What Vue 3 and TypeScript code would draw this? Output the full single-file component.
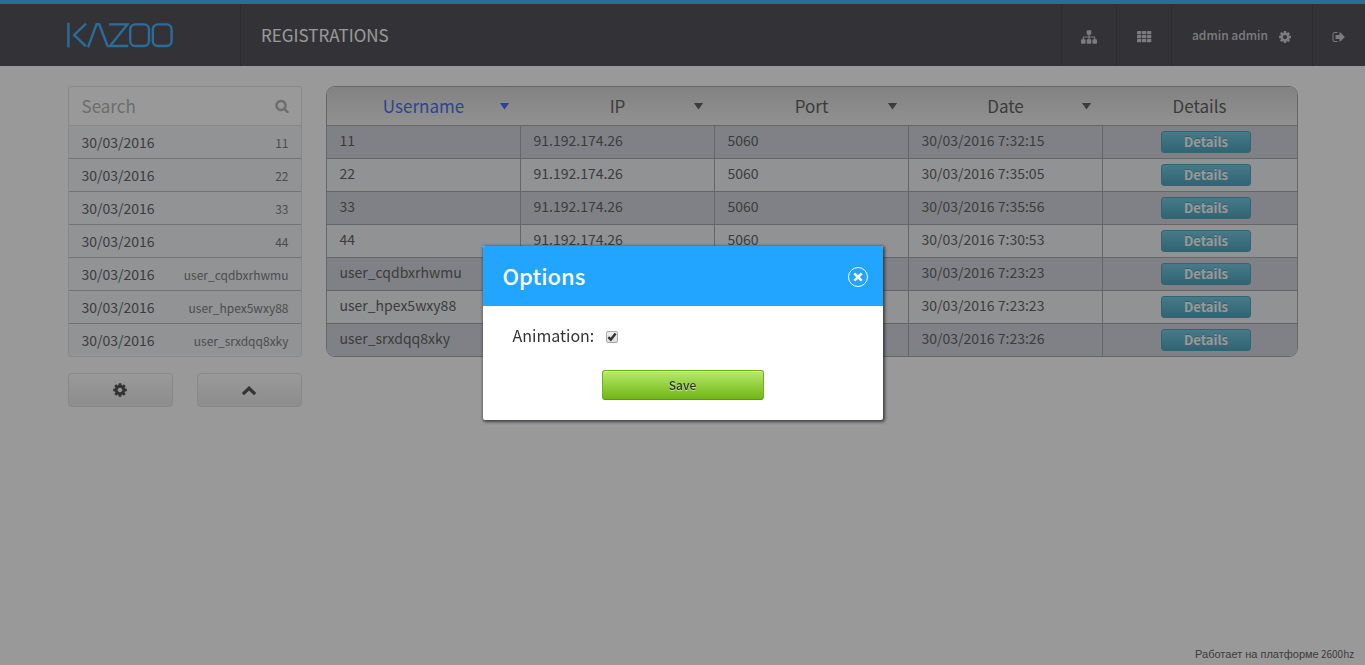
<script setup lang="ts">
import { ref, computed } from 'vue'

interface Registration {
  username: string
  ip: string
  port: number
  day: string
  time: string
}

const day = '30/03/2016'
const ip = '91.192.174.26'

const registrations: Registration[] = [
  { username: '11', ip, port: 5060, day, time: '7:32:15' },
  { username: '22', ip, port: 5060, day, time: '7:35:05' },
  { username: '33', ip, port: 5060, day, time: '7:35:56' },
  { username: '44', ip, port: 5060, day, time: '7:30:53' },
  { username: 'user_cqdbxrhwmu', ip, port: 5060, day, time: '7:23:23' },
  { username: 'user_hpex5wxy88', ip, port: 5060, day, time: '7:23:23' },
  { username: 'user_srxdqq8xky', ip, port: 5060, day, time: '7:23:26' },
]

const columns = ['Username', 'IP', 'Port', 'Date']
const sortedBy = ref('Username')
const search = ref('')
const animation = ref(true)
const dialogOpen = ref(true)

const visible = computed(() =>
  registrations.filter((r) => r.username.includes(search.value.trim())),
)

const cogPath =
  'M1152 896q0-106-75-181t-181-75-181 75-75 181 75 181 181 75 181-75 75-181zm512-109v222q0 12-8 23t-20 13l-185 28q-19 54-39 91 35 50 107 138 10 12 10 25t-9 23q-27 37-99 108t-94 71q-12 0-26-9l-138-108q-44 23-91 38-16 136-29 186-7 28-36 28h-222q-14 0-24.5-8.5t-11.5-21.5l-28-184q-49-16-90-37l-141 107q-10 9-25 9-14 0-25-11-126-114-165-168-7-10-7-23 0-12 8-23 15-21 51-66.5t54-70.5q-27-50-41-99l-183-27q-13-2-21-12.5t-8-23.5v-222q0-12 8-23t19-13l186-28q14-46 39-92-40-57-107-138-10-12-10-24 0-10 9-23 26-36 98.5-107.5t94.5-71.5q13 0 26 10l138 107q44-23 91-38 16-136 29-186 7-28 36-28h222q14 0 24.5 8.5t11.5 21.5l28 184q49 16 90 37l142-107q9-9 24-9 13 0 25 10 129 119 165 170 7 8 7 22 0 12-8 23-15 21-51 66.5t-54 70.5q26 50 41 98l183 28q13 2 21 12.5t8 23.5z'
</script>

<template>
  <div class="page">
    <header class="topbar">
      <a class="brand" href="#" aria-label="Kazoo">
        <svg width="108" height="28" viewBox="0 0 108 28" fill="none" stroke="#22a5ff" stroke-width="2.4" aria-hidden="true">
          <path d="M2.4 1.8v24.6" />
          <path d="M20 2.6 8.2 14 20 25.4" />
          <path d="M22 26.4 30.6 3.2h2.6L42 26" />
          <path d="M43 3.4h18.4L44 25h18.4" />
          <rect x="64.2" y="3.4" width="18.8" height="21.6" rx="5" />
          <rect x="86.8" y="3.4" width="18.8" height="21.6" rx="5" />
        </svg>
      </a>
      <h1 class="title">REGISTRATIONS</h1>
      <nav class="tools">
        <a class="tool" href="#" aria-label="Accounts">
          <svg class="icon16" viewBox="0 0 1792 1792" aria-hidden="true">
            <path d="M1792 1248v320q0 40-28 68t-68 28h-320q-40 0-68-28t-28-68v-320q0-40 28-68t68-28h96v-192h-512v192h96q40 0 68 28t28 68v320q0 40-28 68t-68 28h-320q-40 0-68-28t-28-68v-320q0-40 28-68t68-28h96v-192h-512v192h96q40 0 68 28t28 68v320q0 40-28 68t-68 28h-320q-40 0-68-28t-28-68v-320q0-40 28-68t68-28h96v-192q0-52 38-90t90-38h512v-192h-96q-40 0-68-28t-28-68v-320q0-40 28-68t68-28h320q40 0 68 28t28 68v320q0 40-28 68t-68 28h-96v192h512q52 0 90 38t38 90v192h96q40 0 68 28t28 68z" />
          </svg>
        </a>
        <a class="tool" href="#" aria-label="Apps">
          <svg class="icon16" viewBox="0 0 16 16" aria-hidden="true">
            <g v-for="row in 3" :key="row">
              <rect v-for="col in 3" :key="col" :x="col * 5 - 4" :y="row * 4 - 2" width="4.3" height="3.2" rx="0.4" />
            </g>
          </svg>
        </a>
        <a class="tool user" href="#">
          <span>admin admin</span>
          <svg class="icon14" viewBox="0 0 1792 1792" aria-hidden="true"><path :d="cogPath" /></svg>
        </a>
        <a class="tool exit" href="#" aria-label="Log out">
          <svg class="icon14" viewBox="0 0 1792 1792" aria-hidden="true">
            <path d="M704 1440q0 4 1 20t.5 26.5-3 23.5-10 19.5-20.5 6.5h-320q-119 0-203.5-84.5t-84.5-203.5v-704q0-119 84.5-203.5t203.5-84.5h320q13 0 22.5 9.5t9.5 22.5q0 4 1 20t.5 26.5-3 23.5-10 19.5-20.5 6.5h-320q-66 0-113 47t-47 113v704q0 66 47 113t113 47h312l11.5 1 11.5 3 8 5.5 7 9 2 13.5zm928-544q0 26-19 45l-544 544q-19 19-45 19t-45-19-19-45v-288h-448q-26 0-45-19t-19-45v-384q0-26 19-45t45-19h448v-288q0-26 19-45t45-19 45 19l544 544q19 19 19 45z" />
          </svg>
        </a>
      </nav>
    </header>

    <main class="content">
      <aside class="side">
        <div class="panel">
          <label class="search">
            <input v-model="search" type="text" placeholder="Search" aria-label="Search" />
            <svg class="icon14 lens" viewBox="0 0 1792 1792" aria-hidden="true">
              <path d="M1216 832q0-185-131.5-316.5t-316.5-131.5-316.5 131.5-131.5 316.5 131.5 316.5 316.5 131.5 316.5-131.5 131.5-316.5zm512 832q0 52-38 90t-90 38q-54 0-90-38l-343-342q-179 124-399 124-143 0-273.5-55.5t-225-150-150-225-55.5-273.5 55.5-273.5 150-225 225-150 273.5-55.5 273.5 55.5 225 150 150 225 55.5 273.5q0 220-124 399l343 343q37 37 37 90z" />
            </svg>
          </label>
          <ul class="list">
            <li v-for="r in visible" :key="r.username">
              <span class="date">{{ r.day }}</span>
              <span class="name">{{ r.username }}</span>
            </li>
          </ul>
        </div>
        <div class="actions">
          <button type="button" class="plain" aria-label="Options" @click="dialogOpen = true">
            <svg class="icon16" viewBox="0 0 1792 1792" aria-hidden="true"><path :d="cogPath" /></svg>
          </button>
          <button type="button" class="plain" aria-label="Collapse">
            <svg class="icon16" viewBox="0 0 16 16" aria-hidden="true">
              <path d="M8 4 15.2 11 13 13.2 8 8.4 3 13.2.8 11z" />
            </svg>
          </button>
        </div>
      </aside>

      <div class="grid-wrap">
        <table class="grid">
          <thead>
            <tr>
              <th v-for="c in columns" :key="c" scope="col">
                <button type="button" class="sort" :class="{ active: sortedBy === c }" @click="sortedBy = c">
                  <span class="label">{{ c }}</span>
                  <span class="caret"></span>
                </button>
              </th>
              <th scope="col">Details</th>
            </tr>
          </thead>
          <tbody>
            <tr v-for="r in visible" :key="r.username">
              <td>{{ r.username }}</td>
              <td>{{ r.ip }}</td>
              <td>{{ r.port }}</td>
              <td>{{ r.day }} {{ r.time }}</td>
              <td class="more"><button type="button" class="details">Details</button></td>
            </tr>
          </tbody>
        </table>
      </div>
    </main>

    <footer class="footer"><span class="powered">Работает на платформе</span> 2600hz</footer>

    <div v-if="dialogOpen" class="overlay">
      <section class="dialog" role="dialog" aria-labelledby="options-title">
        <header class="dialog-head">
          <h2 id="options-title">Options</h2>
          <button type="button" class="close" aria-label="Close" @click="dialogOpen = false">
            <svg width="10" height="10" viewBox="0 0 10 10" stroke="#fff" stroke-width="2.6" aria-hidden="true">
              <path d="M1.3 1.3 8.7 8.7M8.7 1.3 1.3 8.7" />
            </svg>
          </button>
        </header>
        <form class="dialog-body" @submit.prevent="dialogOpen = false">
          <div class="field">
            <label for="animation">Animation:</label>
            <span class="check">
              <input id="animation" v-model="animation" type="checkbox" />
              <svg v-if="animation" viewBox="0 0 12 12" fill="none" stroke="#333" stroke-width="2.4" aria-hidden="true">
                <path d="M2.4 6.2 4.8 8.6 9.6 2.6" />
              </svg>
            </span>
          </div>
          <button type="submit" class="save">Save</button>
        </form>
      </section>
    </div>
  </div>
</template>

<style>
body {
  margin: 0;
  background: #fff;
}
</style>

<style scoped>
.page {
  min-height: 100vh;
  display: flex;
  flex-direction: column;
  font-family: "Noto Sans CJK SC", "Noto Sans", sans-serif;
  font-size: 14px;
  line-height: 20px;
  color: #444;
}

.page *,
.page {
  box-sizing: border-box;
}

button,
input {
  font-family: inherit;
  color: inherit;
  margin: 0;
}

button {
  cursor: pointer;
  padding: 0;
}

svg {
  display: block;
}

.icon14 {
  width: 14px;
  height: 14px;
  fill: currentColor;
}

.icon16 {
  width: 16px;
  height: 16px;
  fill: currentColor;
}

.topbar {
  display: flex;
  height: 66px;
  border-top: 4px solid #22a5ff;
  background: #333138;
}

.brand {
  display: flex;
  align-items: center;
  width: 241px;
  padding-left: 66px;
  border-right: 1px solid #242228;
}

.title {
  flex: 1;
  margin: 0;
  padding-left: 20px;
  font-size: 17px;
  font-weight: 400;
  line-height: 61px;
  color: #fff;
}

.tools {
  display: flex;
}

.tool {
  display: flex;
  align-items: center;
  justify-content: center;
  gap: 10px;
  width: 55px;
  padding-top: 4px;
  border-left: 1px solid #242228;
  color: #c4c4ca;
  text-decoration: none;
  font-size: 12px;
  font-weight: 500;
}

.tool.user {
  width: 141px;
}

.tool.user span {
  padding-bottom: 4px;
}

.tool.exit {
  width: 53px;
}

.content {
  flex: 1;
  display: flex;
  align-items: flex-start;
  gap: 24px;
  width: calc(100% - 40px);
  max-width: 1230px;
  margin: 20px auto 0;
}

.side {
  flex: none;
  width: 234px;
}

.panel {
  border: 1px solid #ddd;
  border-radius: 3px;
  overflow: hidden;
}

.search {
  display: flex;
  align-items: center;
  height: 39px;
  padding: 0 12px 0 13px;
  border-bottom: 1px solid #ddd;
  color: #a6a6a4;
}

.search input {
  flex: 1;
  min-width: 0;
  padding: 0;
  border: 0;
  outline: 0;
  background: none;
  font-size: 17px;
  line-height: 26px;
}

.search input::placeholder {
  color: #a6a6a4;
  opacity: 1;
}

.lens {
  stroke: currentColor;
  stroke-width: 60;
}

.list {
  margin: 0;
  padding: 0;
  list-style: none;
}

.list li {
  display: flex;
  align-items: baseline;
  justify-content: space-between;
  height: 33px;
  padding: 6px 12px 0 13px;
  border-bottom: 1px solid #b3b5b9;
  background: #eff3f7;
}

.list li:last-child {
  height: 32px;
  border-bottom: 0;
}

.name {
  font-size: 12px;
  color: #666;
}

.actions {
  display: flex;
  gap: 24px;
  margin-top: 16px;
}

.plain {
  flex: 1;
  display: flex;
  align-items: center;
  justify-content: center;
  height: 34px;
  border: 1px solid #ddd;
  border-radius: 4px;
  background: linear-gradient(#fff, #e6e6e6);
  color: #333;
}

.grid-wrap {
  flex: 1;
  min-width: 0;
}

.grid {
  width: 100%;
  table-layout: fixed;
  border: 1px solid #999;
  border-radius: 9px;
  border-spacing: 0;
  overflow: hidden;
}

.grid th {
  height: 39px;
  padding: 0;
  border-bottom: 1px solid #999;
  background: linear-gradient(#d1d1d1, #efefef);
  font-size: 17px;
  font-weight: 400;
  line-height: 38px;
}

.sort {
  display: grid;
  grid-template-columns: 24px 1fr 24px;
  align-items: center;
  width: 100%;
  border: 0;
  background: none;
  font-size: 17px;
  line-height: 38px;
}

.label {
  grid-column: 2;
}

.caret {
  width: 10px;
  height: 7px;
  margin-left: 3px;
  background: currentColor;
  clip-path: polygon(0 0, 100% 0, 50% 100%);
}

.sort.active {
  color: #2953f0;
}

.grid td {
  height: 33px;
  padding: 0 0 4px 13px;
  border-right: 1px solid #999;
  border-bottom: 1px solid #999;
  background: #eff1f3;
}

.grid tbody tr:nth-child(odd) td {
  background: #cdcfd9;
}

.grid td:last-child {
  border-right: 0;
}

.grid tr:last-child td {
  height: 32px;
  border-bottom: 0;
}

.grid td.more {
  padding-bottom: 0;
  text-align: center;
}

.details {
  display: block;
  width: 90px;
  height: 22px;
  margin: 0 auto;
  border: 1px solid #2f96b4;
  border-radius: 3px;
  background: linear-gradient(#5bc0de, #2f96b4);
  color: #fff;
  font-size: 13px;
  font-weight: 700;
  line-height: 20px;
  text-shadow: 0 -1px 0 rgba(0, 0, 0, 0.25);
}

.footer {
  padding: 0 11px 1px;
  text-align: right;
  font-size: 10px;
}

.powered {
  font-family: "Liberation Sans", sans-serif;
  font-size: 11px;
}

.overlay {
  position: fixed;
  inset: 0;
  display: flex;
  align-items: center;
  justify-content: center;
  background: rgba(51, 51, 51, 0.5);
}

.dialog {
  width: 400px;
  border-radius: 2px;
  overflow: hidden;
  background: #fff;
  box-shadow: 1px 1px 3px 1px rgba(30, 30, 40, 0.7);
}

.dialog-head {
  display: flex;
  align-items: center;
  justify-content: space-between;
  height: 60px;
  padding: 2px 15px 0 20px;
  background: #22a5ff;
  color: #fff;
}

.dialog-head h2 {
  margin: 0;
  padding-bottom: 4px;
  font-size: 22px;
  font-weight: 500;
  line-height: 30px;
}

.close {
  display: flex;
  align-items: center;
  justify-content: center;
  width: 20px;
  height: 20px;
  border: 1px solid #fff;
  border-radius: 50%;
  background: none;
}

.dialog-body {
  padding: 20px 30px;
}

.field {
  display: flex;
  align-items: center;
  gap: 12px;
  height: 20px;
  font-size: 16px;
  color: #333;
}

.field label {
  padding-bottom: 2px;
}

.check {
  position: relative;
  width: 12px;
  height: 12px;
  margin-top: 2px;
}

.check input {
  display: block;
  width: 12px;
  height: 12px;
  appearance: none;
  border: 1px solid #aaa;
  border-radius: 2px;
  background: linear-gradient(#eee, #ddd);
}

.check svg {
  position: absolute;
  inset: 0;
  pointer-events: none;
}

.save {
  display: block;
  width: 162px;
  height: 30px;
  margin: 24px auto 0;
  border: 1px solid #6cb313;
  border-bottom-color: #5a990f;
  border-radius: 3px;
  background: linear-gradient(#b8ea6c, #70b615);
  box-shadow: inset 0 1px 0 rgba(255, 255, 255, 0.3);
  color: #333;
  font-size: 12px;
  font-weight: 500;
  line-height: 28px;
  text-shadow: 0 1px 1px rgba(255, 255, 255, 0.6);
}
</style>
